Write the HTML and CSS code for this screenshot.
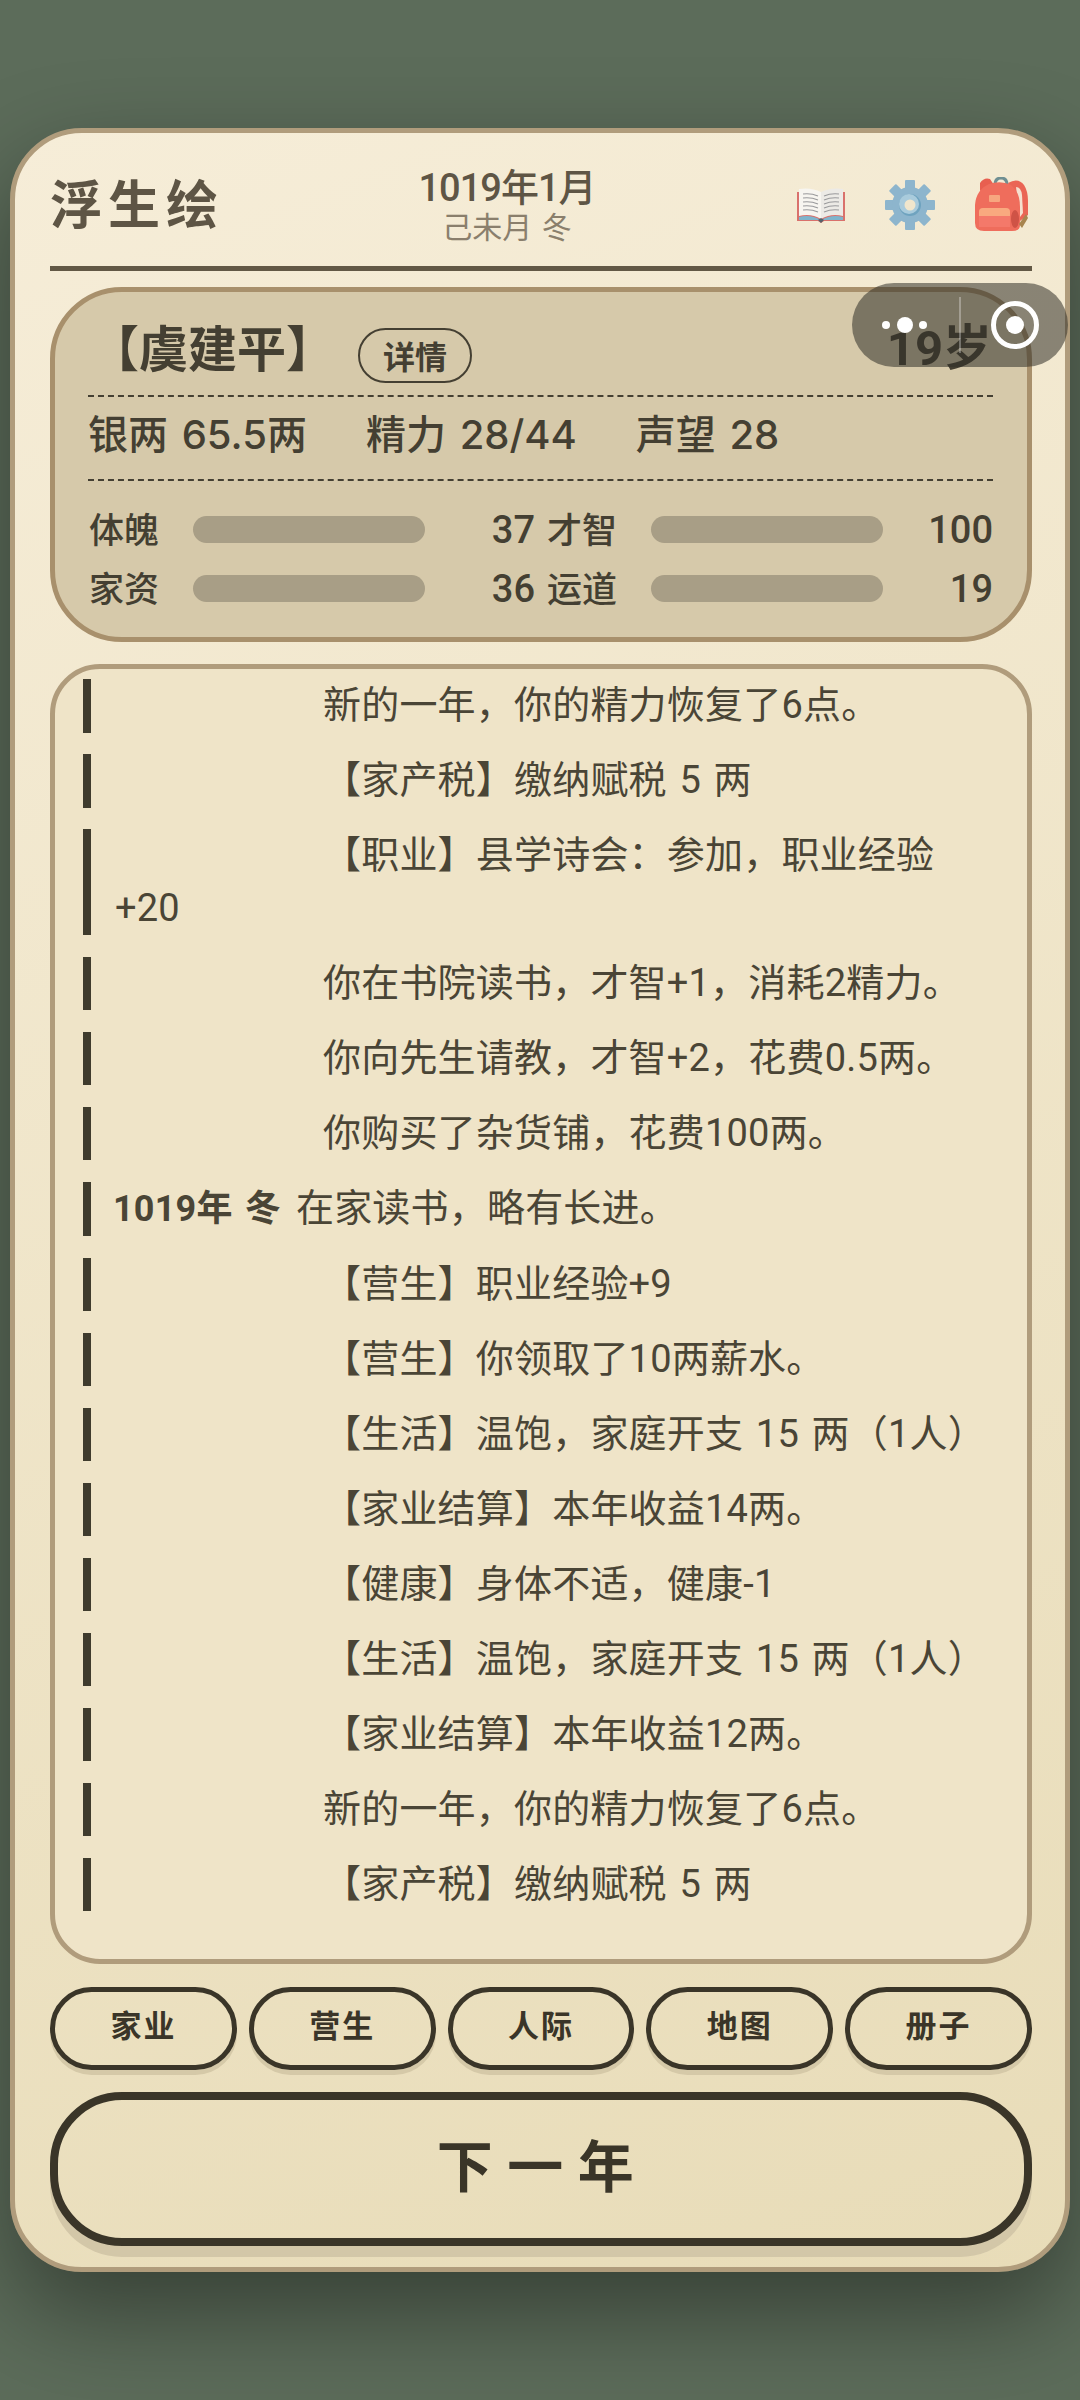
FILE: index.html

```html
<!DOCTYPE html>
<html lang="zh-CN">
<head>
  <meta charset="UTF-8">
  <title>浮生绘</title>
  <link rel="stylesheet" href="styles.css">
</head>
<body>
  <div class="card">
    <header class="header">
      <div class="title">浮生绘</div>
      <div class="date">
        <div class="date-main">1019年1月</div>
        <div class="date-sub">己未月 冬</div>
      </div>
      <div class="icons">
        <svg class="icon-book" viewBox="0 0 50 36">
          <path d="M1 5 L1 34 L22 34 L25 36 L28 34 L49 34 L49 5 Z" fill="#d9716c"/>
          <path d="M3 30 Q14 27 25 33 Q36 27 47 30 L47 33 L3 33 Z" fill="#7fb4cc"/>
          <path d="M3 2 Q15 0 25 5 L25 32 Q15 26 3 29 Z" fill="#f7f5f0"/>
          <path d="M47 2 Q35 0 25 5 L25 32 Q35 26 47 29 Z" fill="#eceae6"/>
          <path d="M7 7 Q15 6 22 9 M7 11 Q15 10 22 13 M7 15 Q15 14 22 17 M7 19 Q15 18 22 21 M7 23 Q15 22 22 25 M43 7 Q35 6 28 9 M43 11 Q35 10 28 13 M43 15 Q35 14 28 17 M43 19 Q35 18 28 21 M43 23 Q35 22 28 25" fill="none" stroke="#9a9a9c" stroke-width="1.2"/>
          <path d="M22 33 L25 36 L28 33 L25 31 Z" fill="#56626a"/>
        </svg>
        <svg class="icon-gear" viewBox="0 0 50 50">
          <g fill="#8db5cd">
            <rect x="20" y="0" width="10" height="50" rx="1"/>
            <rect x="20" y="0" width="10" height="50" rx="1" transform="rotate(45 25 25)"/>
            <rect x="20" y="0" width="10" height="50" rx="1" transform="rotate(90 25 25)"/>
            <rect x="20" y="0" width="10" height="50" rx="1" transform="rotate(135 25 25)"/>
            <circle cx="25" cy="25" r="18"/>
          </g>
          <circle cx="25" cy="25" r="11" fill="#6fa3bf"/>
          <circle cx="24" cy="24" r="10" fill="#a9cbdc"/>
          <circle cx="25" cy="25" r="5.5" fill="#f1e6cc"/>
        </svg>
        <svg class="icon-pack" viewBox="0 0 55 55">
          <path d="M21 8 Q21 1 27 1 Q33 1 33 8" fill="none" stroke="#6f8f92" stroke-width="3"/>
          <path d="M34 6 Q44 0 50 8 Q54 14 54 24 L54 38 L46 44 Z" fill="#ea6555"/>
          <path d="M42 10 Q47 10 48 18 L49 36 L46 40 Z" fill="#f5e0cf"/>
          <path d="M6 14 L6 6 Q10 0 16 2 L20 8 Z" fill="#e85f50"/>
          <path d="M1 46 L1 28 Q2 13 15 7 Q27 3 37 8 Q46 15 46 30 L46 48 Q46 54 38 54 L10 54 Q1 54 1 46 Z" fill="#ef6d5c"/>
          <rect x="15" y="18" width="11" height="7" rx="1" fill="#f7a67f"/>
          <path d="M5 35 Q5 31 9 31 L32 31 Q36 31 36 35 L36 50 L5 50 Z" fill="#f4796a"/>
          <path d="M5 35 Q5 31 9 31 L32 31 Q36 31 36 35 L36 39 L5 39 Z" fill="#f9a97f"/>
          <ellipse cx="41" cy="42" rx="4" ry="9" fill="#cf5346"/>
          <path d="M45 47 L52 37 L54 41 L48 51 Z" fill="#a8854f"/>
        </svg>
      </div>
    </header>

    <section class="stats">
      <div class="stats-head">
        <span class="name">【虞建平】</span>
        <span class="detail-btn">详情</span>
        <span class="age">19岁</span>
      </div>
      <div class="stats-res">
        <span>银两 65.5两</span>
        <span>精力 28/44</span>
        <span>声望 28</span>
      </div>
      <div class="attrs">
        <div class="attr"><span class="attr-name">体魄</span><span class="bar"></span><span class="attr-val">37</span></div>
        <div class="attr"><span class="attr-name">才智</span><span class="bar"></span><span class="attr-val">100</span></div>
        <div class="attr"><span class="attr-name">家资</span><span class="bar"></span><span class="attr-val">36</span></div>
        <div class="attr"><span class="attr-name">运道</span><span class="bar"></span><span class="attr-val">19</span></div>
      </div>
    </section>

    <section class="log">
      <p class="entry ind">新的一年，你的精力恢复了6点。</p>
      <p class="entry ind">【家产税】缴纳赋税 5 两</p>
      <p class="entry ind">【职业】县学诗会：参加，职业经验+20</p>
      <p class="entry ind">你在书院读书，才智+1，消耗2精力。</p>
      <p class="entry ind">你向先生请教，才智+2，花费0.5两。</p>
      <p class="entry ind">你购买了杂货铺，花费100两。</p>
      <p class="entry"><b class="when">1019年 冬</b>在家读书，略有长进。</p>
      <p class="entry ind">【营生】职业经验+9</p>
      <p class="entry ind">【营生】你领取了10两薪水。</p>
      <p class="entry ind">【生活】温饱，家庭开支 15 两（1人）</p>
      <p class="entry ind">【家业结算】本年收益14两。</p>
      <p class="entry ind">【健康】身体不适，健康-1</p>
      <p class="entry ind">【生活】温饱，家庭开支 15 两（1人）</p>
      <p class="entry ind">【家业结算】本年收益12两。</p>
      <p class="entry ind">新的一年，你的精力恢复了6点。</p>
      <p class="entry ind">【家产税】缴纳赋税 5 两</p>
    </section>

    <nav class="nav">
      <button class="nav-btn">家业</button>
      <button class="nav-btn">营生</button>
      <button class="nav-btn">人际</button>
      <button class="nav-btn">地图</button>
      <button class="nav-btn">册子</button>
    </nav>

    <button class="next-btn">下一年</button>
  </div>

  <div class="capsule">
    <span class="dot"></span>
    <span class="dot dot-big"></span>
    <span class="dot"></span>
    <span class="sep"></span>
    <span class="target"></span>
  </div>
</body>
</html>
```

FILE: styles.css

```css
* {
  box-sizing: border-box;
}
html, body {
  margin: 0;
  height: 2400px;
}
body {
  position: relative;
  padding: 128px 10px 0;
  background: #5c6c5a;
  font-family: Roboto, "Noto Sans CJK SC", sans-serif;
  color: #443f32;
  overflow: hidden;
}
.card {
  height: 2144px;
  padding: 0 33px 0 35px;
  border: 5px solid #b09c7c;
  border-radius: 72px;
  background: linear-gradient(160deg, #f6edd8, #e8dcb8);
  box-shadow: 0 40px 100px rgba(0, 0, 0, 0.42);
}

/* top bar */
.header {
  display: flex;
  justify-content: space-between;
  align-items: center;
  height: 138px;
  padding-top: 10px;
  border-bottom: 5px solid #625845;
  color: #5e5545;
}
.title {
  margin-right: -6px;
  margin-bottom: 6px;
  font-size: 52px;
  font-weight: 700;
  letter-spacing: 6px;
}
.date {
  padding-top: 2px;
  text-align: center;
}
.date-main {
  font-size: 38px;
  font-weight: 500;
  line-height: 44px;
  letter-spacing: -1px;
}
.date-sub {
  font-size: 30px;
  line-height: 36px;
  color: #8a7f6c;
  word-spacing: 2px;
}
.icons {
  display: flex;
  align-items: center;
  gap: 39px;
  margin-right: 3px;
}
.icon-book {
  width: 50px;
  height: 36px;
}
.icon-gear {
  width: 50px;
  height: 50px;
}
.icon-pack {
  width: 55px;
  height: 55px;
}

/* character panel */
.stats {
  height: 355px;
  margin-top: 16px;
  padding: 0 34px 0 33px;
  border: 5px solid #a8906c;
  border-radius: 72px;
  background: #d6c9aa;
}
.stats-head {
  display: flex;
  align-items: center;
  height: 105px;
  padding-top: 5px;
  border-bottom: 2px dashed #443f32;
}
.name {
  margin-left: 2px;
  margin-bottom: 2px;
  font-size: 49px;
  font-weight: 700;
}
.detail-btn {
  display: flex;
  align-items: center;
  justify-content: center;
  width: 114px;
  height: 55px;
  margin-top: 18px;
  margin-left: 23px;
  border: 2px solid #443f32;
  border-radius: 28px;
  font-size: 32px;
  font-weight: 700;
}
.age {
  margin-left: auto;
  margin-right: 1px;
  margin-bottom: 6px;
  font-size: 49px;
  font-weight: 700;
}
.stats-res {
  display: flex;
  gap: 59px;
  align-items: center;
  height: 84px;
  padding-bottom: 12px;
  border-bottom: 2px dashed #443f32;
  font-family: Inter, "Noto Sans CJK SC", sans-serif;
  font-size: 40px;
  font-weight: 500;
  word-spacing: 3px;
}
.attrs {
  display: grid;
  grid-template-columns: 1fr 1fr;
  column-gap: 11px;
  grid-auto-rows: 59px;
  padding-top: 19px;
}
.attr {
  display: flex;
  align-items: center;
  font-size: 35px;
  font-weight: 500;
}
.attr-name {
  flex: none;
  width: 70px;
  margin-left: 1px;
  margin-bottom: 5px;
}
.bar {
  flex: none;
  width: 232px;
  height: 27px;
  margin-left: 34px;
  border-radius: 14px;
  background: #a89e86;
}
.attr-val {
  flex: 1;
  text-align: right;
  font-size: 38px;
}

/* event log */
.log {
  height: 1300px;
  margin-top: 22px;
  padding: 10px 36px 0 28px;
  border: 5px solid #b09c7c;
  border-radius: 50px;
  background: #efe4c8;
  overflow: hidden;
}
.entry {
  margin: 0 0 21.5px;
  padding: 0 0 1px 24px;
  border-left: 8px solid #3f3b2d;
  font-size: 38px;
  line-height: 52.5px;
  letter-spacing: 0.2px;
  word-spacing: 3px;
  color: #4a4536;
}
.ind {
  text-indent: 208px;
}
.when {
  margin-left: -2px;
  margin-right: 15px;
  font-weight: 700;
  font-size: 36px;
}

/* buttons */
.nav {
  display: flex;
  gap: 12px;
  margin-top: 23px;
}
.nav-btn {
  flex: 1;
  height: 83px;
  padding: 0 0 10px;
  border: 5px solid #3a3528;
  border-radius: 42px;
  background: transparent;
  box-shadow: 0 5px 0 #d5c9a8;
  font-family: inherit;
  font-size: 31px;
  font-weight: 700;
  letter-spacing: 2px;
  color: #3a3528;
}
.next-btn {
  display: block;
  width: 100%;
  height: 154px;
  margin-top: 22px;
  padding: 0 0 14px 3px;
  border: 8px solid #3a3528;
  border-radius: 72px;
  background: transparent;
  box-shadow: 0 11px 0 #d3c7a8;
  font-family: inherit;
  font-size: 56px;
  font-weight: 700;
  letter-spacing: 14.5px;
  color: #3a3528;
}

/* floating mini program capsule */
.capsule {
  position: absolute;
  top: 283px;
  left: 852px;
  width: 216px;
  height: 84px;
  border-radius: 42px;
  background: rgba(50, 48, 40, 0.55);
}
.dot {
  position: absolute;
  top: 38px;
  left: 30px;
  width: 8px;
  height: 8px;
  border-radius: 50%;
  background: #fff;
}
.dot-big {
  top: 34px;
  left: 45px;
  width: 16px;
  height: 16px;
}
.dot-big + .dot {
  left: 67px;
}
.sep {
  position: absolute;
  top: 14px;
  left: 107px;
  width: 2px;
  height: 56px;
  background: rgba(255, 255, 255, 0.3);
}
.target {
  position: absolute;
  top: 18px;
  left: 139px;
  width: 48px;
  height: 48px;
  border: 5px solid #fff;
  border-radius: 50%;
}
.target::after {
  content: "";
  position: absolute;
  top: 10px;
  left: 10px;
  width: 18px;
  height: 18px;
  border-radius: 50%;
  background: #fff;
}
```
